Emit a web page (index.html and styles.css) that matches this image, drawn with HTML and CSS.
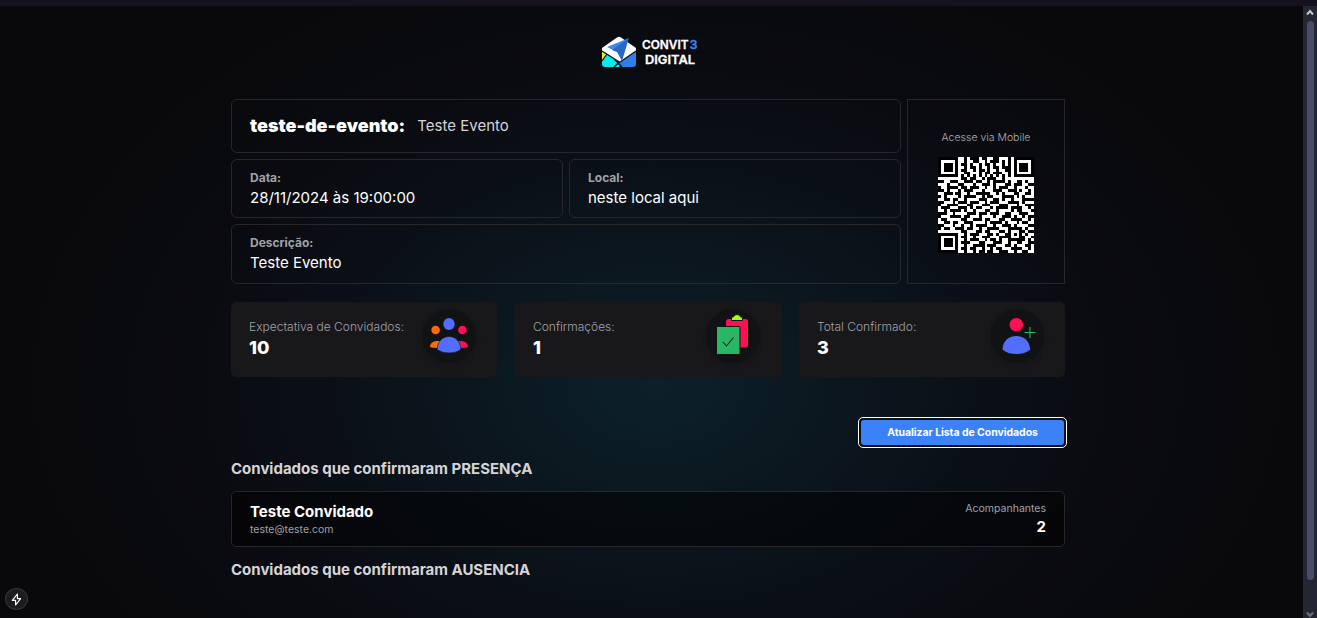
FILE: index.html
```
<!DOCTYPE html>
<html lang="pt-BR">
<head>
<meta charset="utf-8">
<title>Convit3 Digital</title>
<link rel="stylesheet" href="styles.css">
</head>
<body>
<div class="topbar"></div>
<div class="shell">
  <main class="page">
    <header class="brand">
      <svg class="brand-mark" width="34" height="32" viewBox="0 0 34 32">
        <path d="M0 15v13q0 3 3 3h14l3-4z" fill="#00eef2"/>
        <path d="M0 15v9l5-6z" fill="#f4e51c"/>
        <path d="M34 15v13q0 3-3 3H20l-6-4z" fill="#2f7de9"/>
        <path d="M0 12 15 1.500q2-1.500 4 0L34 12v3L18 26 0 15z" fill="#fff"/>
        <path d="M0 15 18 26.500M34 15 16 27.500 12 31M5 18l-5 7M12 23l8 8" stroke="#09121b" stroke-width="1.200" fill="none"/>
        <path d="M27 2 5 11l8 4z" fill="#3d87f3"/>
        <path d="M27 2 10 14l5 2 5 9z" fill="#2867c8"/>
      </svg>
      <svg class="brand-name" width="58" height="30" viewBox="0 0 58 30">
        <text x="1" y="11.500" textLength="46.500" lengthAdjust="spacingAndGlyphs">CONVIT</text>
        <text x="48.500" y="11.500" textLength="8" lengthAdjust="spacingAndGlyphs" class="brand-three">3</text>
        <text x="4" y="26.500" textLength="50" lengthAdjust="spacingAndGlyphs">DIGITAL</text>
      </svg>
    </header>

    <section class="event">
      <div class="box title-box"><h1>teste-de-evento:</h1><span>Teste Evento</span></div>
      <div class="box"><b>Data:</b><p>28/11/2024 às 19:00:00</p></div>
      <div class="box"><b>Local:</b><p>neste local aqui</p></div>
      <div class="box wide"><b>Descrição:</b><p>Teste Evento</p></div>
      <aside class="mobile"><span>Acesse via Mobile</span><svg id="qr" width="96" height="96" viewBox="0 0 33 33" shape-rendering="crispEdges"></svg></aside>
    </section>

    <section class="stats">
      <div class="stat">
        <div><span>Expectativa de Convidados:</span><strong>10</strong></div>
        <div class="disc"><svg width="54" height="54" viewBox="0 0 54 54">
          <circle cx="13.600" cy="21" r="4.300" fill="#ff6b00"/><circle cx="40.400" cy="21" r="4.300" fill="#ff0f54"/>
          <path d="M8 38q0-5 6-6h4l-3 7q-5 0-7-1z" fill="#ff6b00"/><path d="M46 38q0-5-6-6h-4l3 7q5 0 7-1z" fill="#ff0f54"/>
          <ellipse cx="27" cy="15" rx="5.700" ry="6" fill="#536dfe"/>
          <path d="M15 40.500C15.500 32.500 20.500 27.500 27 27.500s11.500 5 12 13Q34 44 27 44t-12-3.500z" fill="#536dfe" stroke="#101314" stroke-width=".6"/>
        </svg></div>
      </div>
      <div class="stat">
        <div><span>Confirmações:</span><strong>1</strong></div>
        <div class="disc"><svg width="54" height="54" viewBox="0 0 54 54">
          <rect x="20" y="10" width="22" height="28.500" rx="2.500" fill="#ff0f54"/>
          <path d="M25.500 11.500V9q0-1.200 2-1.200 1-2.300 3.500-2.300t3.500 2.300q2 0 2 1.200v2.500z" fill="#aaff00" stroke="#101314"/>
          <rect x="10.500" y="17.500" width="23.500" height="28" rx="1" fill="#29b765" stroke="#101314"/>
          <path d="m17 33 3.500 4 7-8.500" fill="none" stroke="#102118" stroke-width="1.100"/>
        </svg></div>
      </div>
      <div class="stat">
        <div><span>Total Confirmado:</span><strong>3</strong></div>
        <div class="disc"><svg width="54" height="54" viewBox="0 0 54 54">
          <circle cx="26.300" cy="15.700" r="6.800" fill="#ff0f54"/>
          <path d="M12.500 40.500C13 32 18.500 27 26.300 27s13.300 5 14 13.500Q35 45 26.300 45t-13.800-4.500z" fill="#536dfe"/>
          <path d="M40 18v11M34.500 23.500h11" stroke="#29b765" stroke-width="1.100"/>
        </svg></div>
      </div>
    </section>

    <div class="actions"><div class="focus-ring"><button>Atualizar Lista de Convidados</button></div></div>

    <h2>Convidados que confirmaram PRESENÇA</h2>
    <div class="guest">
      <div><strong>Teste Convidado</strong><small>teste@teste.com</small></div>
      <div class="companions"><small>Acompanhantes</small><strong>2</strong></div>
    </div>
    <h2>Convidados que confirmaram AUSENCIA</h2>
  </main>
  <div class="scrollbar">
    <svg width="8" height="7" viewBox="0 0 8 7"><path d="M1 5.500 4 2l3 3.500" fill="none" stroke="#c6c6c2" stroke-width="2"/></svg>
    <div class="thumb"></div>
    <svg width="8" height="7" viewBox="0 0 8 7"><path d="M1 1.500 4 5l3-3.500" fill="none" stroke="#72736f" stroke-width="2"/></svg>
  </div>
</div>
<div class="dev-badge"><svg width="11" height="13" viewBox="0 0 12 14"><path d="M7 1 1.500 8H5v5L10.500 6H7z" fill="none" stroke="#fff" stroke-width="1.300" stroke-linejoin="round"/></svg></div>
<script src="qr.js"></script>
</body>
</html>
```
FILE: styles.css
```
* { box-sizing: border-box; }
body { margin: 0; height: 618px; overflow: hidden; background: #09090b; color: #fff; font-family: Inter, "Liberation Sans", sans-serif; }
h1, h2, p { margin: 0; font-size: inherit; }
svg { display: block; flex: none; }
.topbar { height: 6px; background: #15111e; }
.shell { display: flex; height: 612px; }
.page { flex: 1; padding: 29px 238px 0 231px; background: radial-gradient(ellipse 650px 450px at 655px 378px, #0c2029 0, #0b1a22 20%, #0b141c 36%, #0a0f17 52%, #0a0b10 72%, #09090b 100%); }
.brand { display: flex; gap: 5px; height: 64px; padding: 1px 0 0 371px; }
.brand-name { margin-top: 1px; }
.brand-name text { font: 600 12px Inter, sans-serif; fill: #fff; stroke: #fff; stroke-width: .3px; }
.brand-name .brand-three { fill: #3b82f6; stroke: #3b82f6; }

.event { display: grid; grid-template-columns: 332px 332px 158px; grid-template-rows: 54px 59px 60px; gap: 6px; }
.box { border: 1px solid #27272a; border-radius: 6px; padding: 10px 18px; }
.box b { display: block; font-size: 12px; line-height: 16px; font-weight: 700; color: #a1a1aa; }
.box p { font-size: 15px; line-height: 24px; }
.title-box, .wide { grid-column: 1 / 3; }
.title-box { display: flex; align-items: center; gap: 12px; padding-top: 8px; }
.title-box h1 { font-size: 18px; font-weight: 900; }
.title-box span { font-size: 15px; color: #d4d4d8; }
.mobile { grid-column: 3; grid-row: 1 / 4; display: flex; flex-direction: column; align-items: center; gap: 11px; border: 1px solid #27272a; padding-top: 30px; }
.mobile span { font-size: 10.500px; line-height: 16px; font-weight: 300; color: #b0b0b8; }

.stats { display: grid; grid-template-columns: repeat(3, 266px); gap: 18px; margin-top: 18px; }
.stat { display: flex; justify-content: space-between; height: 75px; padding: 7px 21px 0 18px; border-radius: 5px; background: #18181b; }
.stat span { display: block; margin-top: 9px; font-size: 12px; line-height: 18px; font-weight: 300; color: #a1a1aa; }
.stat strong { display: block; font-size: 18px; line-height: 24px; font-weight: 800; }
.disc { width: 54px; height: 54px; border-radius: 50%; background: #101214; box-shadow: 0 3px 5px #1113; }

.actions { display: flex; justify-content: flex-end; margin: 40px -2px 0 0; }
.focus-ring { width: 209px; height: 31px; padding: 2px; border: 1px solid #fff; border-radius: 5px; background: #0b1017; }
button { display: block; width: 100%; height: 100%; padding: 0 0 1px; border: 0; border-radius: 3px; background: #3b82f6; color: #fff; font: 700 10.500px Inter, sans-serif; letter-spacing: -.06px; }
h2 { margin-top: 11px; font-size: 15px; line-height: 20px; font-weight: 700; color: #d4d4d8; }
.guest { display: flex; justify-content: space-between; height: 56px; margin: 12px 0 13px; padding: 10px 18px; border: 1px solid #27272a; border-radius: 5px; background: rgba(0, 0, 0, .5); }
.guest + h2 { margin-top: 0; }
.guest div { display: flex; flex-direction: column; }
.guest strong { font-size: 15px; line-height: 20px; font-weight: 700; }
.guest small { font-size: 10.500px; line-height: 16px; color: #a1a1aa; }
.guest .companions { align-items: flex-end; margin-top: -1px; }
.companions strong { line-height: 20px; }

.scrollbar { display: flex; flex-direction: column; align-items: center; width: 14px; padding-top: 3px; background: #232733; }
.thumb { width: 7px; height: 559px; margin: 5px 0 31px 1px; border-radius: 4px; background: #4a4d69; }
.dev-badge { position: absolute; left: 5px; top: 588px; display: grid; place-items: center; width: 23px; height: 22px; border: 1px solid #343438; border-radius: 50%; background: #1c1c1e; }
```
FILE: qr.js
```
// Each string is one row of modules; '#' marks a dark module.
const rows = [
  "#######..#.###.##..##...#.#######",
  "#.....#..#..##..#.###.#.#.#.....#",
  "#.###.#.##.#..#.##.#..#.#.#.###.#",
  "#.###.#..#.##.#..#.##.###.#.###.#",
  "#.###.#.##..#.##.#..#..##.#.###.#",
  "#.....#..##...#.##.###..#.#.....#",
  "#######.#.#.#.#.#.#.#.#.#.#######",
  "........##.##..#.###..#..........",
  "##..###..###.##..#.####.#..##.#..",
  "...#...##...#..###.#...##.###..##",
  "#..####.##.###..#..#.###..#...#..",
  "##.#...#.###...#...###..###.#..#.",
  "..###.##..#..#####..#.#...##..##.",
  "#.#....#.####..#.##...####.#.#...",
  "..##.##..#....###..##.#..#...####",
  "##...#.###.###..#.###...####.#...",
  "#..####...##...###...###...#..###",
  ".###...###.#.##...#.####.####..#.",
  "..#.####.#..#...##..#....#.##...#",
  "###..#....###.###.###..##...###..",
  "#...####.##...#....#..###.#..#.##",
  ".##.....##..###.##...##..####..#.",
  "..##.##..###....#.####.#...#.##..",
  "##...#..#..#.####..#..###.#....##",
  "#.##..###.##..#..####...#####.#..",
  "........##...##.##...##.#...##.##",
  "#######..#.###...##.#..##.#.#.#..",
  "#.....#.##..#..###...####...##..#",
  "#.###.#..#.###..#.##.#..######.#.",
  "#.###.#.###...##...###..#..##..##",
  "#.###.#..#..####.###...##.#...##.",
  "#.....#.##.##..#..#.##...####..#.",
  "#######..#..#.##.##..###..#..##.."
];
const qr = document.getElementById("qr");
let d = "";
rows.forEach((row, y) => [...row].forEach((c, x) => {
  if (c === "#") d += `M${x} ${y}h1v1h-1z`;
}));
qr.innerHTML = `<rect width="33" height="33" fill="#fff"/><path d="${d}" fill="#000"/>`;
```
